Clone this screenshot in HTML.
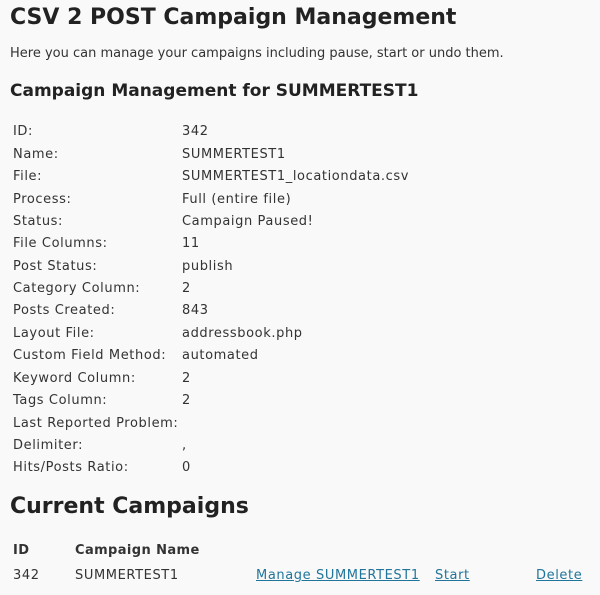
<!DOCTYPE html>
<html><head><style>
body{margin:0;background:#f9f9f9;width:600px;height:595px;overflow:hidden;font-family:"DejaVu Sans","Liberation Sans",sans-serif;color:#333;font-size:13px;letter-spacing:0.6px;position:relative}
.a{position:absolute;white-space:nowrap;line-height:16px}
h1,h2,h3{margin:0;position:absolute;white-space:nowrap;color:#222;letter-spacing:0}
a{color:#21759b;text-decoration:underline}
</style></head><body>
<h1 style="left:10px;top:4px;font-size:22px;line-height:28px">CSV 2 POST Campaign Management</h1>
<div class="a" style="left:10px;top:46px;font-size:13px;letter-spacing:0">Here you can manage your campaigns including pause, start or undo them.</div>
<h3 style="left:10px;top:81px;font-size:17px;line-height:20px">Campaign Management for SUMMERTEST1</h3>
<div class="a" style="left:13px;top:124px">ID:</div><div class="a" style="left:182px;top:124px">342</div>
<div class="a" style="left:13px;top:146.5px">Name:</div><div class="a" style="left:182px;top:146.5px">SUMMERTEST1</div>
<div class="a" style="left:13px;top:169px">File:</div><div class="a" style="left:182px;top:169px">SUMMERTEST1_locationdata.csv</div>
<div class="a" style="left:13px;top:191.5px">Process:</div><div class="a" style="left:182px;top:191.5px">Full (entire file)</div>
<div class="a" style="left:13px;top:214px">Status:</div><div class="a" style="left:182px;top:214px">Campaign Paused!</div>
<div class="a" style="left:13px;top:236px">File Columns:</div><div class="a" style="left:182px;top:236px">11</div>
<div class="a" style="left:13px;top:258.5px">Post Status:</div><div class="a" style="left:182px;top:258.5px">publish</div>
<div class="a" style="left:13px;top:281px">Category Column:</div><div class="a" style="left:182px;top:281px">2</div>
<div class="a" style="left:13px;top:303px">Posts Created:</div><div class="a" style="left:182px;top:303px">843</div>
<div class="a" style="left:13px;top:325.5px">Layout File:</div><div class="a" style="left:182px;top:325.5px">addressbook.php</div>
<div class="a" style="left:13px;top:348px">Custom Field Method:</div><div class="a" style="left:182px;top:348px">automated</div>
<div class="a" style="left:13px;top:370.5px">Keyword Column:</div><div class="a" style="left:182px;top:370.5px">2</div>
<div class="a" style="left:13px;top:393px">Tags Column:</div><div class="a" style="left:182px;top:393px">2</div>
<div class="a" style="left:13px;top:415.5px">Last Reported Problem:</div>
<div class="a" style="left:13px;top:438px">Delimiter:</div><div class="a" style="left:182px;top:438px">,</div>
<div class="a" style="left:13px;top:460px">Hits/Posts Ratio:</div><div class="a" style="left:182px;top:460px">0</div>
<h2 style="left:10px;top:493px;font-size:22px;line-height:28px">Current Campaigns</h2>
<div class="a" style="left:13px;top:543px;font-weight:bold;letter-spacing:0.4px">ID</div>
<div class="a" style="left:75px;top:543px;font-weight:bold;letter-spacing:0.4px">Campaign Name</div>
<div class="a" style="left:13px;top:568px">342</div>
<div class="a" style="left:75px;top:568px">SUMMERTEST1</div>
<div class="a" style="left:256px;top:568px"><a>Manage SUMMERTEST1</a></div>
<div class="a" style="left:435px;top:568px"><a>Start</a></div>
<div class="a" style="left:536px;top:568px"><a>Delete</a></div>
</body></html>
